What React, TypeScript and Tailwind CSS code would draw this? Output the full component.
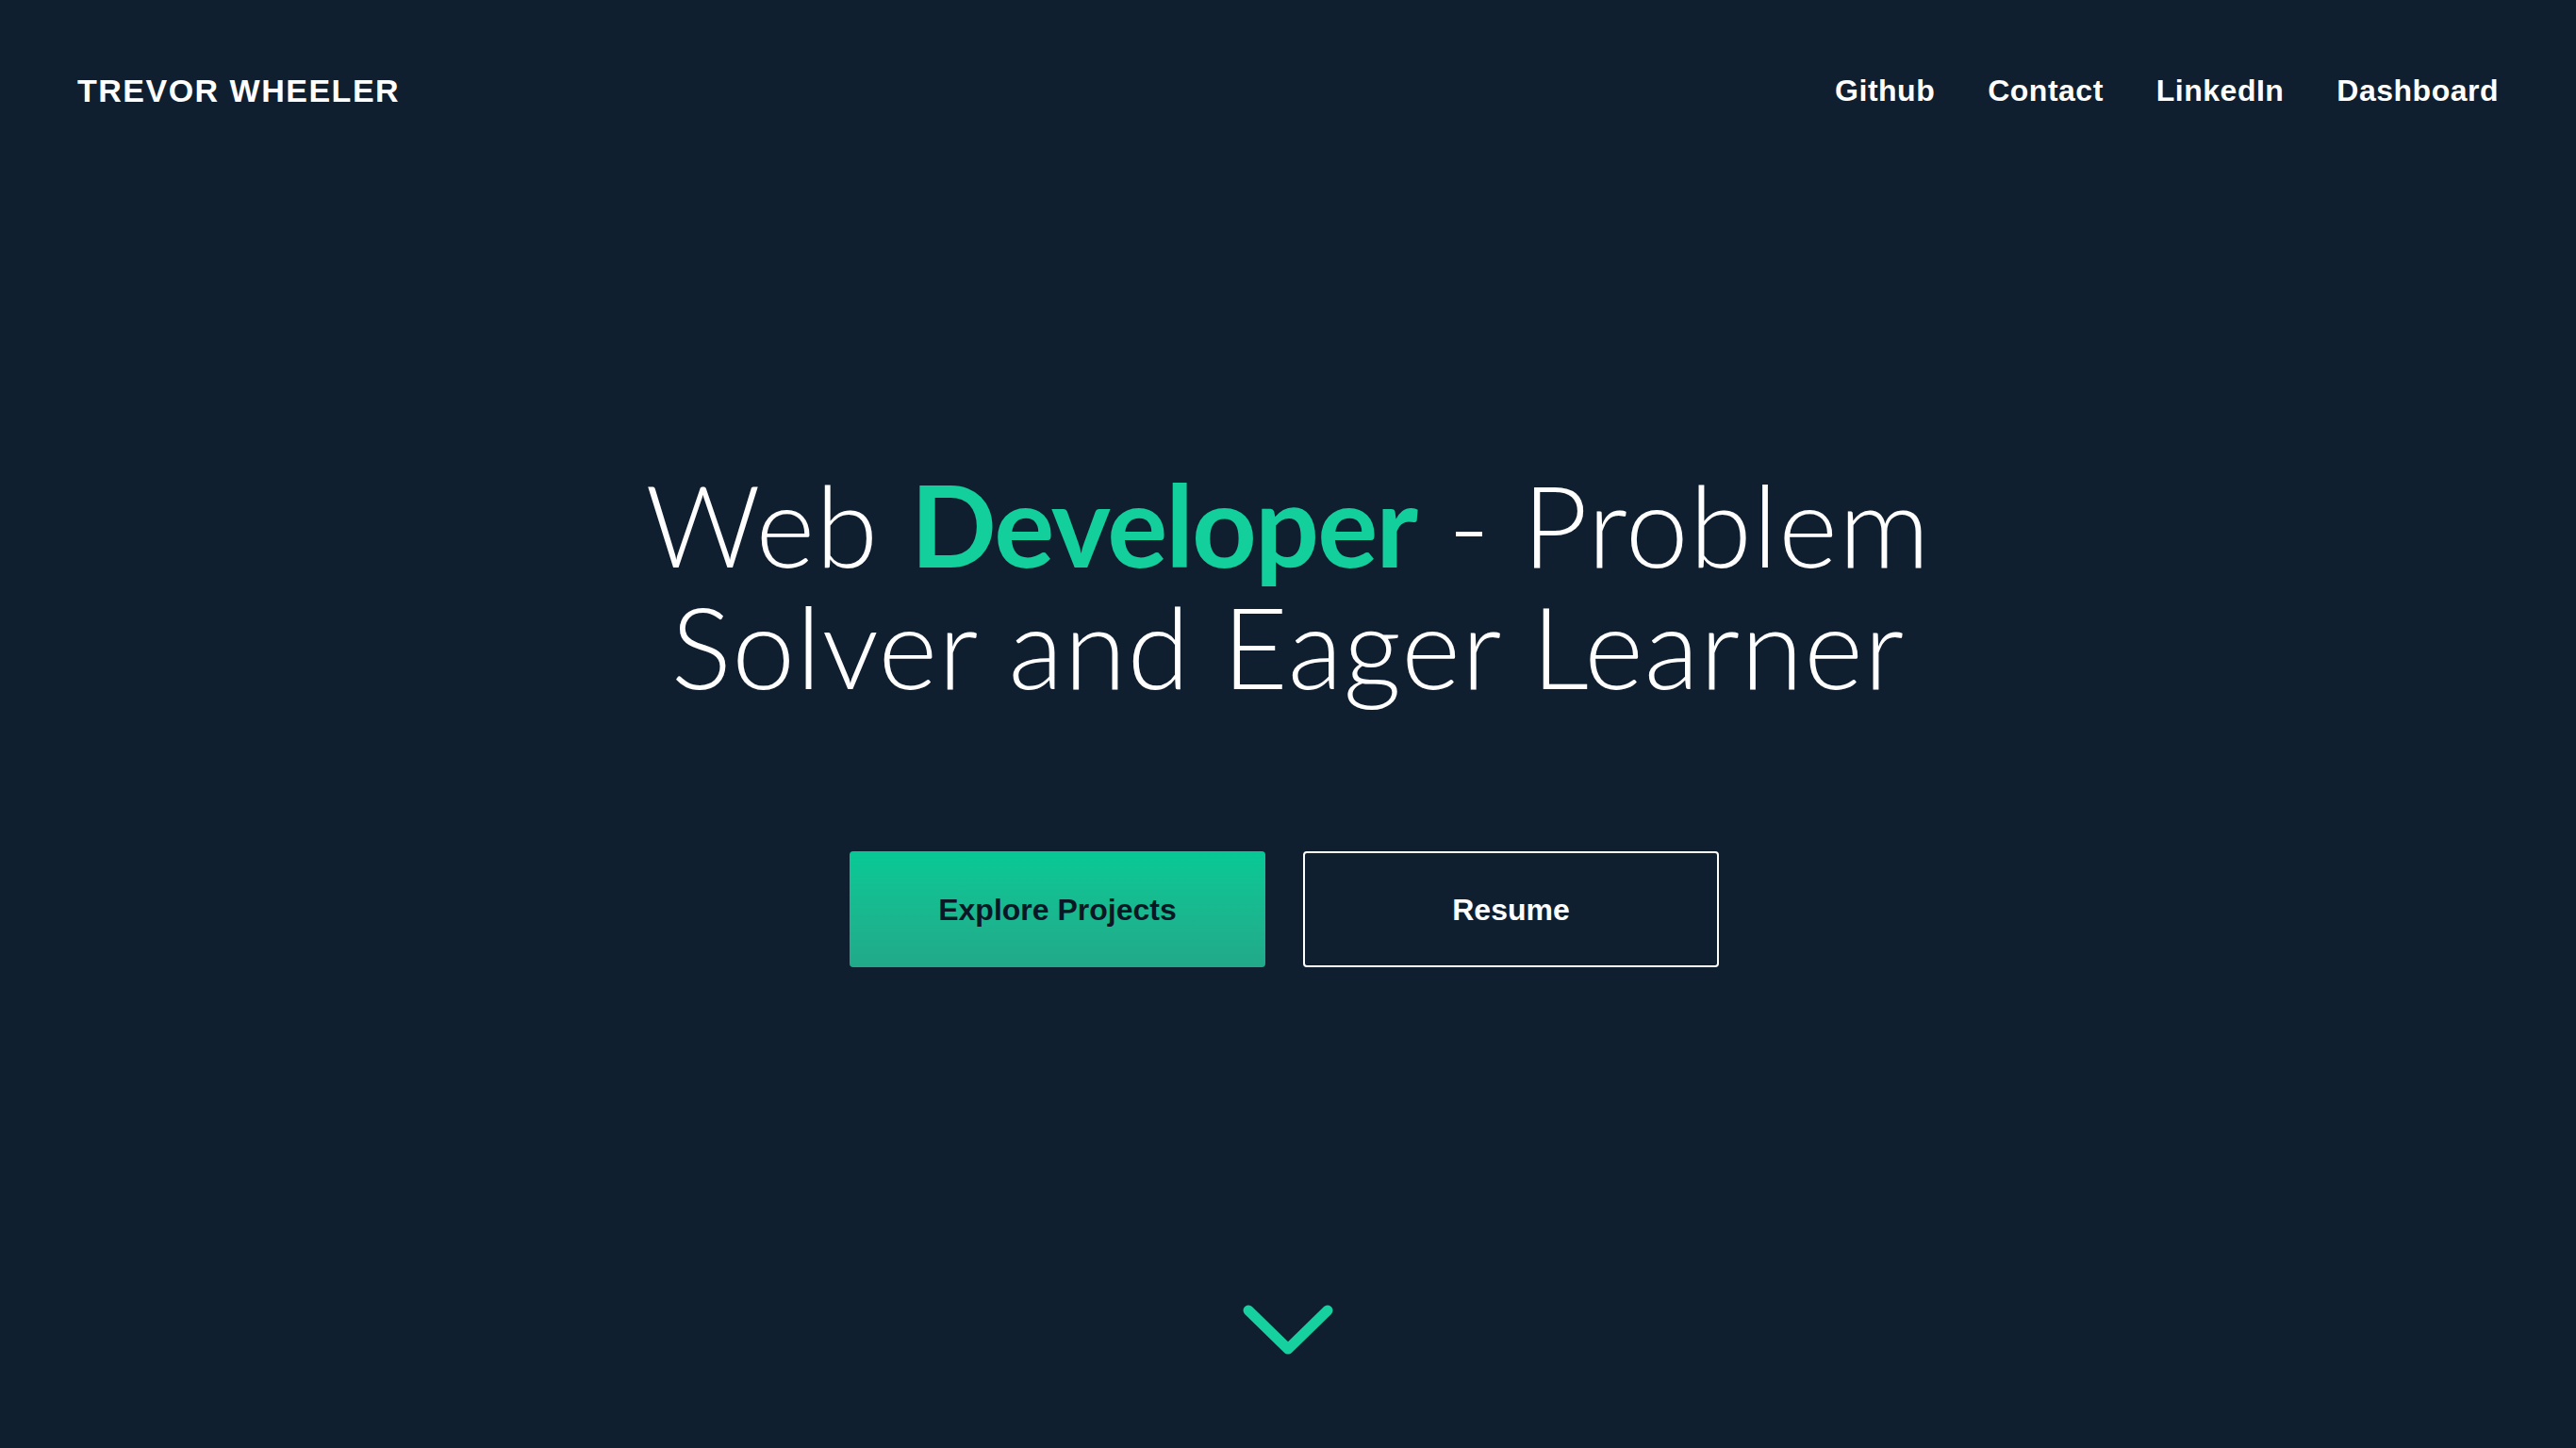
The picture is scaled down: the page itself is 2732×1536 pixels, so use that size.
import React from 'react';

const navLinks = ['Github', 'Contact', 'LinkedIn', 'Dashboard'];

const Header: React.FC = () => (
  <header className="h-[192px] px-[82px] flex items-center justify-between">
    <a href="#" className="text-[34px] font-bold tracking-[1.5px] text-white leading-none">
      TREVOR WHEELER
    </a>
    <nav className="flex items-center gap-[56px]">
      {navLinks.map((link) => (
        <a key={link} href="#" className="text-[32px] font-bold tracking-[0.5px] text-white leading-none">
          {link}
        </a>
      ))}
    </nav>
  </header>
);

const App: React.FC = () => {
  return (
    <div className="min-h-screen bg-[#101f30] font-['Liberation_Sans',Arial,sans-serif] text-white">
      <Header />

      <main className="flex flex-col items-center">
        {/* Headline */}
        <h1 className="mt-[300px] text-center text-[120px] leading-[129px] font-light font-['Lato',sans-serif] tracking-[1px]">
          Web <span className="font-bold tracking-[-2px] text-[#12cf9c]">Developer</span> - Problem
          <br />
          Solver and Eager Learner
        </h1>

        {/* CTA buttons */}
        <div className="mt-[153px] mr-[8px] flex gap-[40px]">
          <a
            href="#"
            className="w-[441px] h-[123px] rounded-[4px] bg-gradient-to-b from-[#06c995] to-[#21a98a] flex items-center justify-center text-[32px] font-bold text-[#0b1724]"
          >
            Explore Projects
          </a>
          <a
            href="#"
            className="w-[441px] h-[123px] rounded-[4px] border-2 border-white flex items-center justify-center text-[32px] font-bold text-white"
          >
            Resume
          </a>
        </div>

        {/* Scroll indicator */}
        <a href="#" className="mt-[354px] block">
          <svg width="100" height="62" viewBox="0 0 100 62" fill="none">
            <path
              d="M8 10 L50 51 L92 10"
              stroke="#17d09f"
              strokeWidth="11"
              strokeLinecap="round"
              strokeLinejoin="round"
            />
          </svg>
        </a>
      </main>
    </div>
  );
};

export default App;
